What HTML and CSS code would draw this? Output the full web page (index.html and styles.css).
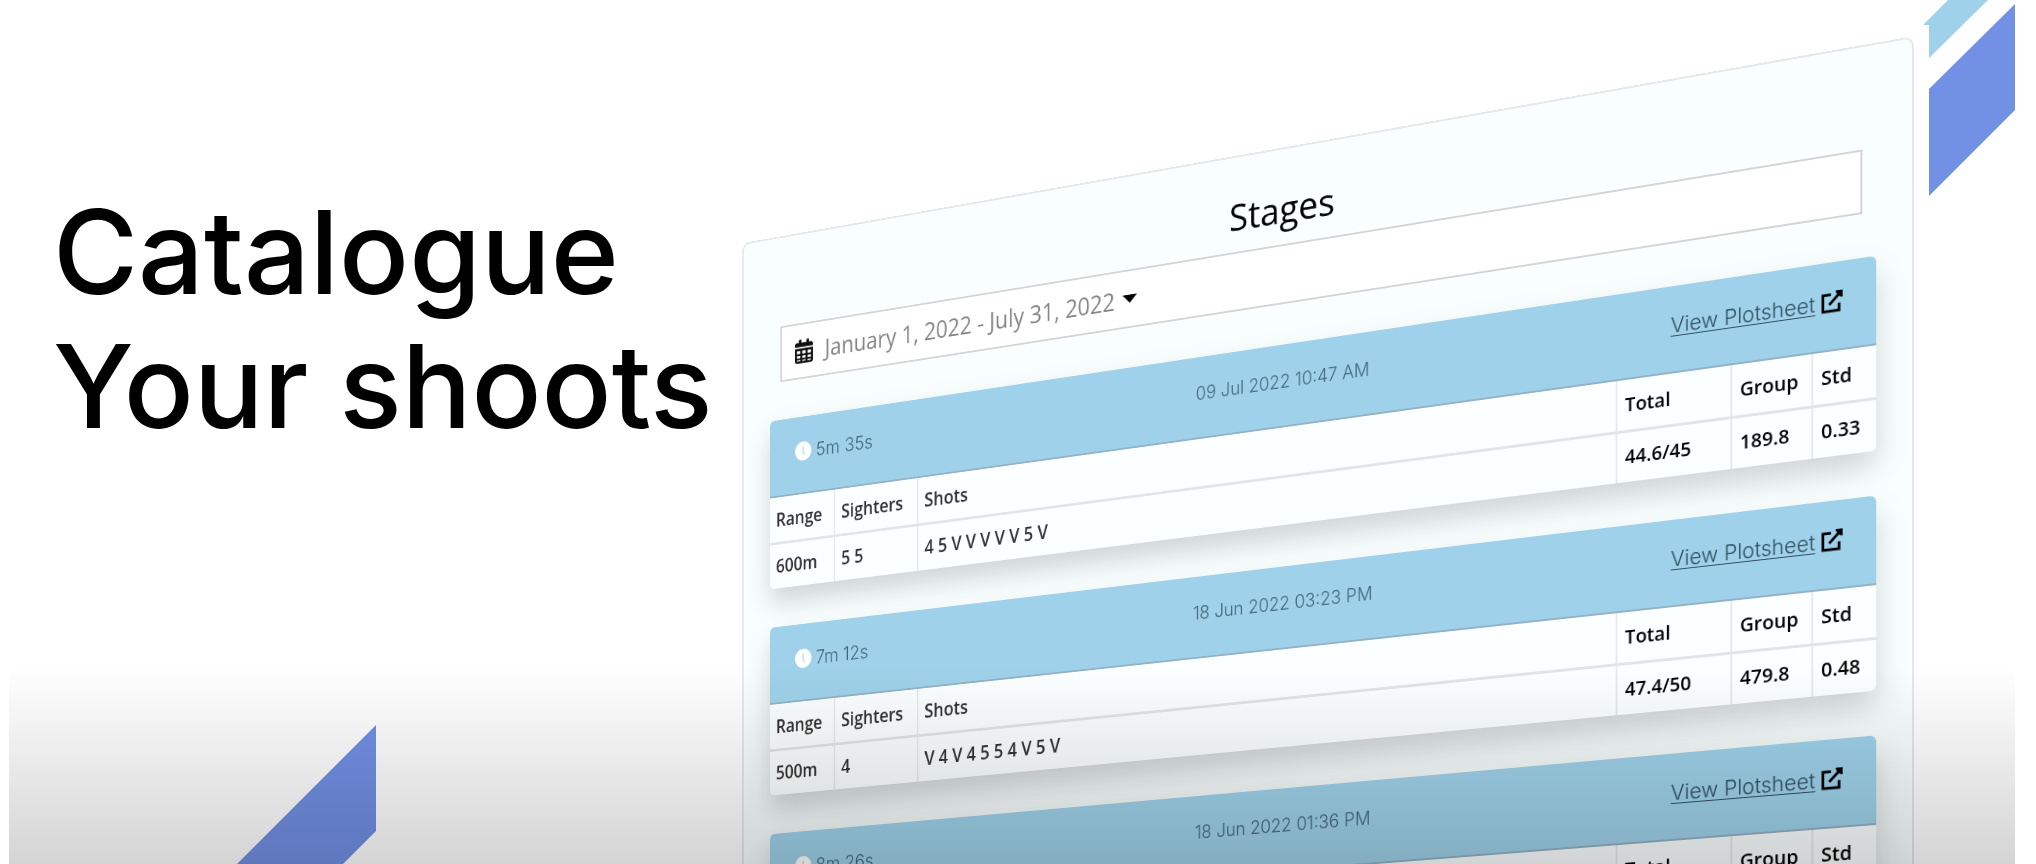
FILE: index.html
```html
<!DOCTYPE html>
<html lang="en">
<head>
<meta charset="utf-8">
<title>Catalogue your shoots</title>
<link rel="stylesheet" href="styles.css">
</head>
<body>
<svg class="sprite" aria-hidden="true">
  <symbol id="calendar" viewBox="0 0 448 512"><path fill-rule="evenodd" d="M0 464c0 26 22 48 48 48h352c26 0 48-22 48-48V192H0zM48 240h86v66H48zm134 0h84v66h-84zm132 0h86v66h-86zM48 350h86v50H48zm134 0h84v50h-84zm132 0h86v50h-86zM48 436h86v28H48zm134 0h84v28h-84zm132 0h86v28h-86zM448 160v-48c0-26-22-48-48-48h-48V12c0-7-5-12-12-12h-40c-7 0-12 5-12 12v52H160V12c0-7-5-12-12-12h-40c-7 0-12 5-12 12v52H48C22 64 0 86 0 112v48z"/></symbol>
  <symbol id="clock" viewBox="0 0 24 24"><circle cx="12" cy="12" r="12" fill="#fff"/><path d="M12 6v8l2 3" fill="none" stroke="#c4e1ee" stroke-width="2"/></symbol>
  <symbol id="external" viewBox="0 0 24 24"><path d="M11 4H2V22H20V14" fill="none" stroke="currentColor" stroke-width="3"/><path d="M9 15L20 4" fill="none" stroke="currentColor" stroke-width="3"/><path d="M16 0H24V8L21 7L17 3Z" fill="currentColor"/></symbol>
</svg>
<main class="slide">
  <svg class="stripes-top" viewBox="0 0 92 200" aria-hidden="true">
    <path class="light" d="M0 25L25 0H65L6 58V25Z"/>
    <path class="dark" d="M6 89L92 4V110L6 196Z"/>
  </svg>
  <svg class="stripe-bottom" viewBox="0 0 140 140" aria-hidden="true">
    <path class="dark" d="M139 1V107L106 140H0Z"/>
  </svg>
  <h1 class="headline">Catalogue<br>Your shoots</h1>
  <section class="panel">
    <h2 class="title">Stages</h2>
    <button class="range" type="button">
      <svg class="calendar-icon"><use href="#calendar"/></svg>
      <span class="range-text">January 1, 2022 - July 31, 2022</span>
      <span class="caret"></span>
    </button>
    <div class="cards">
      <article class="card">
        <header class="card-head">
          <span class="duration"><svg class="icon"><use href="#clock"/></svg>5m 35s</span>
          <time class="when">09 Jul 2022 10:47 AM</time>
          <span class="view"><a href="#">View Plotsheet</a><svg class="icon"><use href="#external"/></svg></span>
        </header>
        <table class="scores">
          <colgroup><col class="c-range"><col class="c-sighters"><col><col class="c-total"><col class="c-group"><col class="c-std"></colgroup>
          <thead><tr><th>Range</th><th>Sighters</th><th>Shots</th><th>Total</th><th>Group</th><th>Std</th></tr></thead>
          <tbody><tr><td>600m</td><td>5 5</td><td>4 5 V V V V V 5 V</td><td>44.6/45</td><td>189.8</td><td>0.33</td></tr></tbody>
        </table>
      </article>
      <article class="card">
        <header class="card-head">
          <span class="duration"><svg class="icon"><use href="#clock"/></svg>7m 12s</span>
          <time class="when">18 Jun 2022 03:23 PM</time>
          <span class="view"><a href="#">View Plotsheet</a><svg class="icon"><use href="#external"/></svg></span>
        </header>
        <table class="scores">
          <colgroup><col class="c-range"><col class="c-sighters"><col><col class="c-total"><col class="c-group"><col class="c-std"></colgroup>
          <thead><tr><th>Range</th><th>Sighters</th><th>Shots</th><th>Total</th><th>Group</th><th>Std</th></tr></thead>
          <tbody><tr><td>500m</td><td>4</td><td>V 4 V 4 5 5 4 V 5 V</td><td>47.4/50</td><td>479.8</td><td>0.48</td></tr></tbody>
        </table>
      </article>
      <article class="card">
        <header class="card-head">
          <span class="duration"><svg class="icon"><use href="#clock"/></svg>8m 26s</span>
          <time class="when">18 Jun 2022 01:36 PM</time>
          <span class="view"><a href="#">View Plotsheet</a><svg class="icon"><use href="#external"/></svg></span>
        </header>
        <table class="scores">
          <colgroup><col class="c-range"><col class="c-sighters"><col><col class="c-total"><col class="c-group"><col class="c-std"></colgroup>
          <thead><tr><th></th><th></th><th></th><th>Total</th><th>Group</th><th>Std</th></tr></thead>
        </table>
      </article>
    </div>
  </section>
  <div class="shade"></div>
</main>
</body>
</html>
```

FILE: styles.css
```css
* { box-sizing: border-box; }

body {
  margin: 0;
  background: #fff;
  font-family: "Open Sans", "Noto Sans", sans-serif;
  color: #000;
}

.sprite { position: absolute; width: 0; height: 0; }

.slide {
  position: relative;
  display: grid;
  height: 100vh;
  margin: 0 21px 0 9px;
  overflow: hidden;
}

.headline,
.panel { grid-area: 1 / 1; }

.headline {
  margin: 0;
  padding: 185px 0 0 44px;
  font: 500 116px/134px Inter, "Open Sans", sans-serif;
}

.stripes-top { position: absolute; top: 0; right: 0; width: 92px; height: 200px; }
.stripe-bottom { position: absolute; bottom: 0; left: 228px; width: 140px; height: 140px; }
.light { fill: #9fd2ea; }
.dark { fill: #7290e4; }

.shade {
  position: absolute;
  inset: auto 0 0;
  height: 196px;
  background: linear-gradient(rgba(0, 0, 0, 0), rgba(0, 0, 0, 0.17));
  pointer-events: none;
}

/* The panel turns away from the viewer, its right edge nearest. */
.panel {
  justify-self: end;
  width: 68.5%;
  min-height: 1100px;
  margin: 36px 101px 0 0;
  padding: 30px 36px 24px;
  background: #f9ffff;
  border: 2px solid #e4e8e8;
  border-radius: 10px;
  transform-origin: 100% 0;
  transform: matrix3d(1, -0.17678, 0, -0.00012564, 0, 1, 0, 0, 0, 0, 1, 0, 0, 0, 0, 1);
}

.title {
  margin: 0 0 5px;
  font-size: 41px;
  font-weight: 500;
  line-height: 68px;
  text-align: center;
}

.range {
  display: flex;
  align-items: center;
  width: calc(100% - 28px);
  height: 65px;
  margin: 0 14px 44px;
  padding: 0 18px;
  background: #fff;
  border: 2px solid #d4d4d4;
  font: 27px/36px "Open Sans", "Noto Sans", sans-serif;
  color: #858585;
}

.calendar-icon { width: 24px; height: 28px; fill: #111; }
.range-text { margin: 0 9px 0 16px; }
.caret { border: 9px solid transparent; border-top-color: #000; border-bottom: 0; }

.cards { display: grid; gap: 45px; }

.card {
  background: #fcffff;
  border-radius: 6px;
  box-shadow: 0 16px 32px rgba(0, 0, 0, 0.17);
}

.card-head {
  display: grid;
  grid-template-columns: 1fr auto 1fr;
  align-items: center;
  height: 90px;
  padding: 0 34px 8px;
  background: #9fd2ea;
  border-bottom: 2px solid #93b2c6;
  border-radius: 6px 6px 0 0;
  font: 300 22px/32px Inter, "Open Sans", sans-serif;
  color: #42677c;
}

.duration,
.view { display: flex; align-items: center; gap: 6px; }
.view { justify-content: flex-end; }
.view a { color: #2f4f60; text-underline-offset: 3px; text-decoration-thickness: 1px; }
.when { font-size: 20px; }
.icon { width: 22px; height: 22px; color: #000; }

.scores {
  width: 100%;
  table-layout: fixed;
  border-collapse: collapse;
  font-size: 21px;
  line-height: 28px;
  color: #333;
}

.scores th,
.scores td {
  height: 53px;
  padding: 0 8px;
  border-left: 2px solid #e6eaea;
  font-weight: 600;
  text-align: left;
  white-space: nowrap;
}

.scores th { border-bottom: 3px solid #e2e5e5; }
.scores th:first-child,
.scores td:first-child { border-left: 0; }
.scores th:nth-child(n + 4),
.scores td:nth-child(n + 4) { color: #000; font-size: 20px; }

.c-range { width: 87px; }
.c-sighters { width: 110px; }
.c-total { width: 122px; }
.c-group { width: 84px; }
.c-std { width: 65px; }
```
